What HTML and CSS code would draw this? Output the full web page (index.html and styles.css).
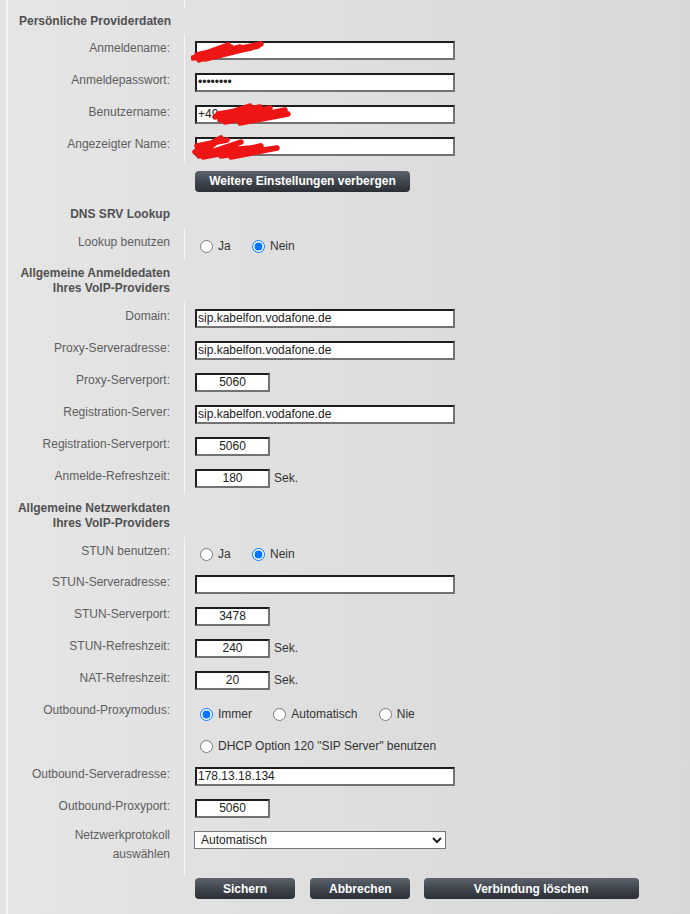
FILE: index.html
```html
<!DOCTYPE html>
<html lang="de">
<head>
    <meta charset="UTF-8">
    <title>Telefonie - Providerdaten</title>
    <link rel="stylesheet" href="styles.css">
</head>
<body>
    <div class="page">
        <table class="form">
            <tr class="spacer"><td class="lbl"></td><td></td></tr>

            <!-- Persönliche Providerdaten -->
            <tr class="sec-first"><th colspan="2" class="sec-left">Persönliche Providerdaten</th></tr>
            <tr>
                <td class="lbl">Anmeldename:</td>
                <td>
                    <span class="field">
                        <input class="txt" type="text" value="">
                        <svg class="mark mark-1" width="90" height="26" viewBox="0 0 90 26"><path d="M4 19 L37 7 L9 20 L49 9 L14 21 L67 8 M2 20 L70 6 M6 17 L40 9 L8 22 L30 14 M20 18 L60 10" /></svg>
                    </span>
                </td>
            </tr>
            <tr>
                <td class="lbl">Anmeldepasswort:</td>
                <td><input class="txt" type="password" value="xxxxxxxx"></td>
            </tr>
            <tr>
                <td class="lbl">Benutzername:</td>
                <td>
                    <span class="field">
                        <input class="txt" type="text" value="+49">
                        <svg class="mark mark-2" width="82" height="24" viewBox="0 0 82 24"><path d="M5 15 L40 4 L10 18 L60 6 L15 20 L75 8 L30 21 L78 12 M8 12 L50 5 M12 16 L66 10" /></svg>
                    </span>
                </td>
            </tr>
            <tr>
                <td class="lbl">Angezeigter Name:</td>
                <td>
                    <span class="field">
                        <input class="txt" type="text" value="">
                        <svg class="mark mark-3" width="92" height="30" viewBox="0 0 92 30"><path d="M4 20 L30 6 L8 24 L50 10 L12 25 L70 14 L30 24 L86 16 L40 25 M6 14 L36 8 M10 20 L60 16" /></svg>
                    </span>
                </td>
            </tr>
            <tr class="row-btn">
                <td></td>
                <td><button class="btn btn-wide">Weitere Einstellungen verbergen</button></td>
            </tr>

            <!-- DNS SRV Lookup -->
            <tr class="sec-dns"><th class="sec-right">DNS SRV Lookup</th><td></td></tr>
            <tr>
                <td class="lbl">Lookup benutzen</td>
                <td>
                    <label class="opt"><input type="radio" name="srv">Ja</label>
                    <label class="opt"><input type="radio" name="srv" checked>Nein</label>
                </td>
            </tr>

            <!-- Anmeldedaten des Providers -->
            <tr class="sec-two"><th class="sec-right">Allgemeine Anmeldedaten<br>Ihres VoIP-Providers</th><td></td></tr>
            <tr>
                <td class="lbl">Domain:</td>
                <td><input class="txt" type="text" value="sip.kabelfon.vodafone.de"></td>
            </tr>
            <tr>
                <td class="lbl">Proxy-Serveradresse:</td>
                <td><input class="txt" type="text" value="sip.kabelfon.vodafone.de"></td>
            </tr>
            <tr>
                <td class="lbl">Proxy-Serverport:</td>
                <td><input class="txt txt-short" type="text" value="5060"></td>
            </tr>
            <tr>
                <td class="lbl">Registration-Server:</td>
                <td><input class="txt" type="text" value="sip.kabelfon.vodafone.de"></td>
            </tr>
            <tr>
                <td class="lbl">Registration-Serverport:</td>
                <td><input class="txt txt-short" type="text" value="5060"></td>
            </tr>
            <tr>
                <td class="lbl">Anmelde-Refreshzeit:</td>
                <td><input class="txt txt-short" type="text" value="180"><span class="unit">Sek.</span></td>
            </tr>

            <!-- Netzwerkdaten des Providers -->
            <tr class="sec-net"><th class="sec-right">Allgemeine Netzwerkdaten<br>Ihres VoIP-Providers</th><td></td></tr>
            <tr class="row-stun">
                <td class="lbl">STUN benutzen:</td>
                <td>
                    <label class="opt"><input type="radio" name="stun">Ja</label>
                    <label class="opt"><input type="radio" name="stun" checked>Nein</label>
                </td>
            </tr>
            <tr>
                <td class="lbl">STUN-Serveradresse:</td>
                <td><input class="txt" type="text" value=""></td>
            </tr>
            <tr>
                <td class="lbl">STUN-Serverport:</td>
                <td><input class="txt txt-short" type="text" value="3478"></td>
            </tr>
            <tr>
                <td class="lbl">STUN-Refreshzeit:</td>
                <td><input class="txt txt-short" type="text" value="240"><span class="unit">Sek.</span></td>
            </tr>
            <tr>
                <td class="lbl">NAT-Refreshzeit:</td>
                <td><input class="txt txt-short" type="text" value="20"><span class="unit">Sek.</span></td>
            </tr>
            <tr>
                <td class="lbl">Outbound-Proxymodus:</td>
                <td>
                    <label class="opt"><input type="radio" name="obmode" checked>Immer</label>
                    <label class="opt"><input type="radio" name="obmode">Automatisch</label>
                    <label class="opt"><input type="radio" name="obmode">Nie</label>
                </td>
            </tr>
            <tr>
                <td class="lbl"></td>
                <td><label class="opt"><input type="radio" name="obmode">DHCP Option 120 "SIP Server" benutzen</label></td>
            </tr>
            <tr>
                <td class="lbl">Outbound-Serveradresse:</td>
                <td><input class="txt" type="text" value="178.13.18.134"></td>
            </tr>
            <tr>
                <td class="lbl">Outbound-Proxyport:</td>
                <td><input class="txt txt-short" type="text" value="5060"></td>
            </tr>
            <tr class="row-proto">
                <td class="lbl">Netzwerkprotokoll<br>auswählen</td>
                <td>
                    <select class="sel">
                        <option>Automatisch</option>
                        <option>UDP</option>
                        <option>TCP</option>
                    </select>
                </td>
            </tr>
            <tr class="row-actions">
                <td></td>
                <td>
                    <button class="btn btn-small">Sichern</button>
                    <button class="btn btn-small btn-mid">Abbrechen</button>
                    <button class="btn btn-wide">Verbindung löschen</button>
                </td>
            </tr>
        </table>
    </div>
</body>
</html>
```

FILE: styles.css
```css
* {
    box-sizing: border-box;
}

html, body {
    margin: 0;
    padding: 0;
    height: 100%;
}

body {
    font-family: "Liberation Sans", Arial, sans-serif;
    font-size: 12px;
    color: #333;
    background: #e3e3e3;
    overflow: hidden;
}

.page {
    margin-left: 6px;
    min-height: 100%;
    border-left: 2px solid #f4f4f4;
    background: linear-gradient(to right, #e5e5e5 0%, #dedede 50%, #d8d8d8 100%);
}

/* Formulartabelle */
.form {
    border-collapse: separate;
    border-spacing: 0;
}

.form td,
.form th {
    height: 32px;
    padding: 0;
    vertical-align: middle;
}

.form td.lbl {
    width: 177px;
    padding-right: 14px;
    padding-bottom: 4px;
    text-align: right;
    color: #5e5e5e;
    border-right: 1px solid #f5f5f5;
    white-space: nowrap;
}

.form td + td {
    padding-left: 10px;
}

.form th {
    font-weight: bold;
    color: #505050;
    line-height: 15px;
}

.sec-left {
    text-align: left;
    padding-left: 11px !important;
}

.sec-right {
    text-align: right;
    padding-right: 14px !important;
    border-right: 1px solid transparent;
}

.spacer td { height: 8px; }
.sec-first th { height: 26px; }
.row-btn td { height: 38px; }
.sec-dns th, .sec-dns td { height: 28px; }
.sec-two th, .sec-two td { height: 42px; }
.sec-net th, .sec-net td { height: 43px; }
.row-stun td { height: 31px; }

.row-proto td {
    height: 52px;
    vertical-align: top;
}

.row-proto td.lbl {
    line-height: 19px;
    padding-top: 2px;
    padding-bottom: 0;
}

.row-proto td + td {
    padding-top: 7px;
}

.row-actions td {
    height: 38px;
    vertical-align: top;
    padding-top: 2px;
}

/* Eingabefelder */
.txt {
    display: block;
    width: 260px;
    height: 19px;
    margin: 0;
    padding: 0 1px;
    border: 2px solid;
    border-color: #1e1e1e #727272 #727272 #1e1e1e;
    background: #fff;
    font-family: "Liberation Sans", Arial, sans-serif;
    font-size: 12px;
    color: #222;
    outline: none;
}

.txt-short {
    display: inline-block;
    width: 75px;
    text-align: center;
    vertical-align: middle;
}

.unit {
    margin-left: 4px;
    vertical-align: middle;
    color: #333;
}

.field {
    position: relative;
    display: block;
    width: 260px;
}

/* geschwärzte Einträge */
.mark {
    position: absolute;
    pointer-events: none;
}

.mark path {
    fill: none;
    stroke: #ee1515;
    stroke-width: 5.5;
    stroke-linecap: round;
    stroke-linejoin: round;
}

.mark-1 { left: -4px; top: -3px; }
.mark-2 { left: 15px; top: -3px; }
.mark-3 { left: -4px; top: -5px; }

/* Optionsfelder */
.opt {
    display: inline-flex;
    align-items: center;
    margin-right: 13px;
    padding-top: 6px;
    color: #333;
}

.opt input {
    width: 13px;
    height: 13px;
    margin: 1px 5px 0 5px;
}

.sel {
    display: block;
    width: 252px;
    height: 18px;
    margin-left: -1px;
    padding: 0 2px;
    border: 1px solid #767676;
    border-radius: 0;
    background: #fff;
    font-family: "Liberation Sans", Arial, sans-serif;
    font-size: 12px;
    color: #222;
}

/* Schaltflächen */
.btn {
    height: 21px;
    padding: 0;
    border: none;
    border-radius: 4px;
    background: linear-gradient(to bottom, #5c636c 0%, #3e434b 55%, #2b2f36 100%);
    color: #fff;
    font-family: "Liberation Sans", Arial, sans-serif;
    font-size: 12px;
    font-weight: bold;
    cursor: pointer;
    vertical-align: top;
}

.btn-wide {
    width: 215px;
}

.btn-small {
    width: 100px;
    margin-right: 12px;
}

.btn-mid {
    margin-right: 10px;
}
```
